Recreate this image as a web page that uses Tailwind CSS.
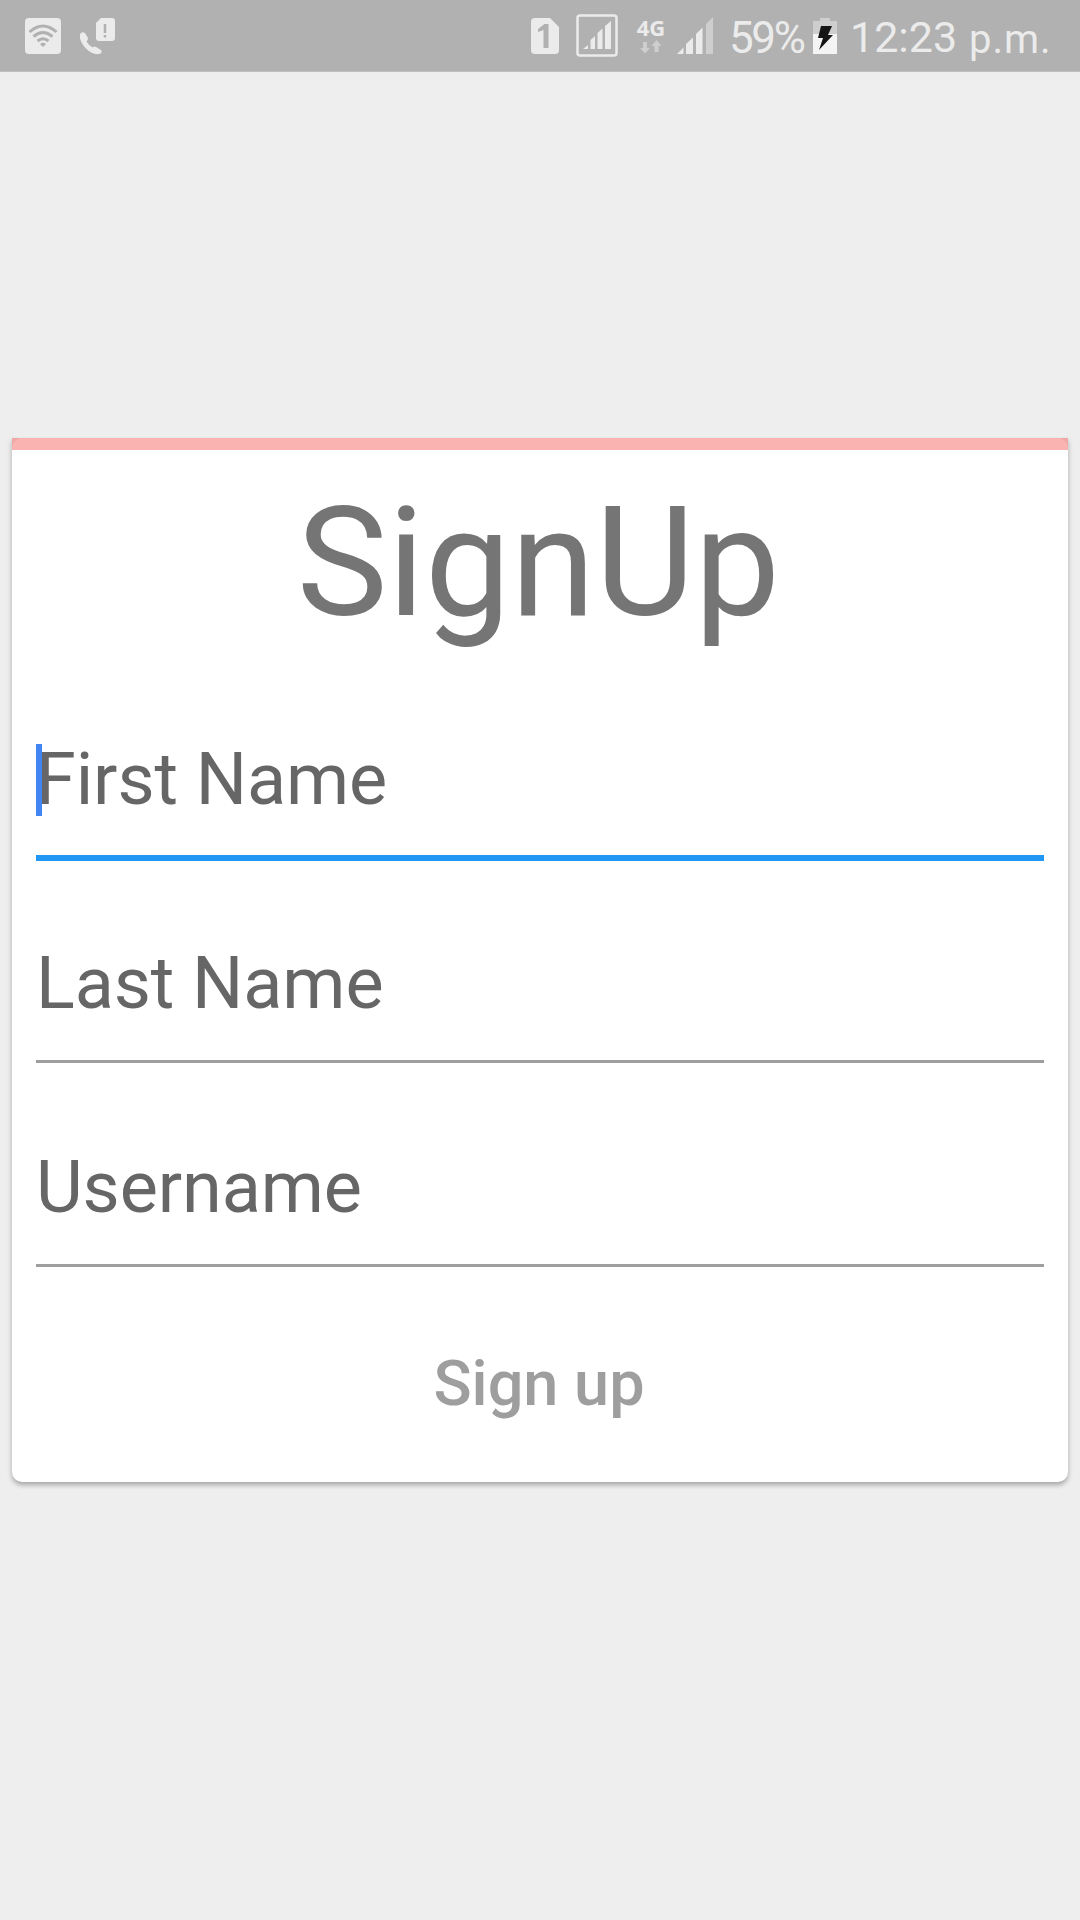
<!DOCTYPE html>
<html lang="en">
  <head>
    <meta charset="UTF-8" />
    <meta name="viewport" content="width=device-width, initial-scale=1.0" />
    <title>SignUp</title>
    <script src="https://cdn.jsdelivr.net/npm/@tailwindcss/browser@4"></script>
  </head>
  <body class="bg-[#eeeeee] font-['Roboto',sans-serif]">
    <div class="flex flex-col w-[1080px] h-[1920px] overflow-hidden">
      <!-- status bar -->
      <header class="flex items-start shrink-0 h-[72px] bg-[#b1b1b1] text-[#ebebeb] border-b border-[#c0c0c0]">
        <svg class="ml-[25px] mt-[18px] w-9 h-9 shrink-0" viewBox="0 0 36 36" fill="none">
          <rect width="36" height="36" rx="4" fill="#ebebeb" />
          <path d="M4.500 14Q18 2 31.500 14M8.500 18.500Q18 10.500 27.500 18.500M12.500 23Q18 18.500 23.500 23" stroke="#b1b1b1" stroke-width="3" />
          <path d="M15 26Q18 23.500 21 26L18 29Z" fill="#b1b1b1" />
        </svg>
        <svg class="ml-[18px] mt-[17px] w-9 h-[38px] shrink-0" viewBox="0 0 36 38" fill="#ebebeb">
          <path d="M22 1h11a3 3 0 0 1 3 3v17a3 3 0 0 1-3 3H20a3 3 0 0 1-3-3V6Z" />
          <path d="M26 7v9M26 18v2.500" stroke="#b1b1b1" stroke-width="2.500" />
          <path d="M1 17Q3 14 6 16L9 21Q9 23 7.500 24.500Q10 28.500 13.500 30.500Q15 29 17 30L22 33Q24 36 20 37Q13 38 6.500 31Q0 24 1 17Z" />
        </svg>
        <svg class="ml-[416px] mt-[17px] w-[28px] h-[37px] shrink-0" viewBox="0 0 28 37">
          <path d="M4 1h15l9 9v23a4 4 0 0 1-4 4H4a4 4 0 0 1-4-4V5a4 4 0 0 1 4-4Z" fill="#ebebeb" />
          <path d="M7 12L13.500 7H17.500V31H12.500V13L7 15Z" fill="#b1b1b1" />
        </svg>
        <svg class="ml-[17px] mt-[14px] w-[42px] h-[43px] shrink-0" viewBox="0 0 42 43">
          <rect x="1.500" y="1.500" width="39" height="40" rx="2.500" fill="none" stroke="#ebebeb" stroke-width="2.500" />
          <path d="M7 35L12 31V35ZM14.500 35V26L19 22V35ZM21.500 35V19L26.500 14.500V35ZM29 35V12L35 7V35Z" fill="#ebebeb" />
        </svg>
        <div class="ml-[18px] mt-[15px] w-[30px] shrink-0 flex flex-col items-center">
          <span class="font-['Open_Sans',sans-serif] font-bold text-[22px] leading-[25px]">4G</span>
          <svg class="w-[22px] h-[14px]" viewBox="0 0 22 14" fill="#cecece">
            <path d="M3 2h4v6h3L5 13.500 0 8h3ZM14.500 12h4V6h3L16.500 0 11.500 6h3Z" />
          </svg>
        </div>
        <svg class="ml-[11px] mt-[17px] w-[36px] h-[37px] shrink-0" viewBox="0 0 36 37">
          <path d="M0 37L6.500 30.500V37ZM9 37V27L16 20.500V37ZM19 37V17L25.500 10.500V37Z" fill="#ebebeb" />
          <path d="M29 37V7L36 0V37Z" fill="#cecece" />
        </svg>
        <span class="ml-[16px] mt-[13px] w-[76px] shrink-0 text-[44px] leading-[50px] tracking-[-2.4px] whitespace-nowrap">59%</span>
        <svg class="ml-[8px] mt-[18px] w-[24px] h-[36px] shrink-0" viewBox="0 0 24 36">
          <path d="M0 3H7V0H17V3H24V36H0Z" fill="#cecece" />
          <path d="M0 16H24V36H0Z" fill="#f4f4f4" />
          <path d="M8 8H19L15 17H20L6 32L10 20H5Z" fill="#151515" />
        </svg>
        <span class="ml-[13px] mt-[12px] w-[106px] shrink-0 text-[43px] leading-[50px] whitespace-nowrap">12:23</span>
        <span class="ml-[13px] mt-[13px] text-[40px] leading-[54px] tracking-[1px] whitespace-nowrap">p.m.</span>
      </header>

      <!-- sign up card -->
      <main class="mx-3 mt-[366px] h-[1044px] shrink-0 bg-white rounded-b-[10px] shadow-[0_3px_5px_rgba(0,0,0,0.3)]">
        <div class="flex justify-between h-3 bg-[#fbb3b1]">
          <svg class="w-2.5 h-2.5" viewBox="0 0 10 10"><path d="M0 0H10Q1 1 0 10Z" fill="#eda8a6" /></svg>
          <svg class="w-2.5 h-2.5" viewBox="0 0 10 10"><path d="M10 0H0Q9 1 10 10Z" fill="#eda8a6" /></svg>
        </div>
        <h1 class="pt-[22px] pr-[3px] text-center text-[153px] leading-[181px] text-[#757575]">SignUp</h1>
        <form class="px-6 text-[72px] leading-[96px] text-[#666666]">
          <div class="relative pt-[79px] pb-[27px] border-b-6 border-[#2196f3]">
            <label class="tracking-[-0.1px]">First Name</label>
            <span class="absolute left-0 top-[91px] w-1.5 h-[72px] bg-[#4285f4]"></span>
          </div>
          <div class="pt-[75px] pb-[28px] border-b-3 border-[#9e9e9e]">
            <label class="tracking-[-0.1px]">Last Name</label>
          </div>
          <div class="pt-[77px] pb-[28px] border-b-3 border-[#9e9e9e]">
            <label class="tracking-[-0.1px]">Username</label>
          </div>
          <button type="button" class="block w-full pt-[69px] pr-0.5 text-center text-[63px] font-medium text-[#9e9e9e]">Sign up</button>
        </form>
      </main>
    </div>
  </body>
</html>
